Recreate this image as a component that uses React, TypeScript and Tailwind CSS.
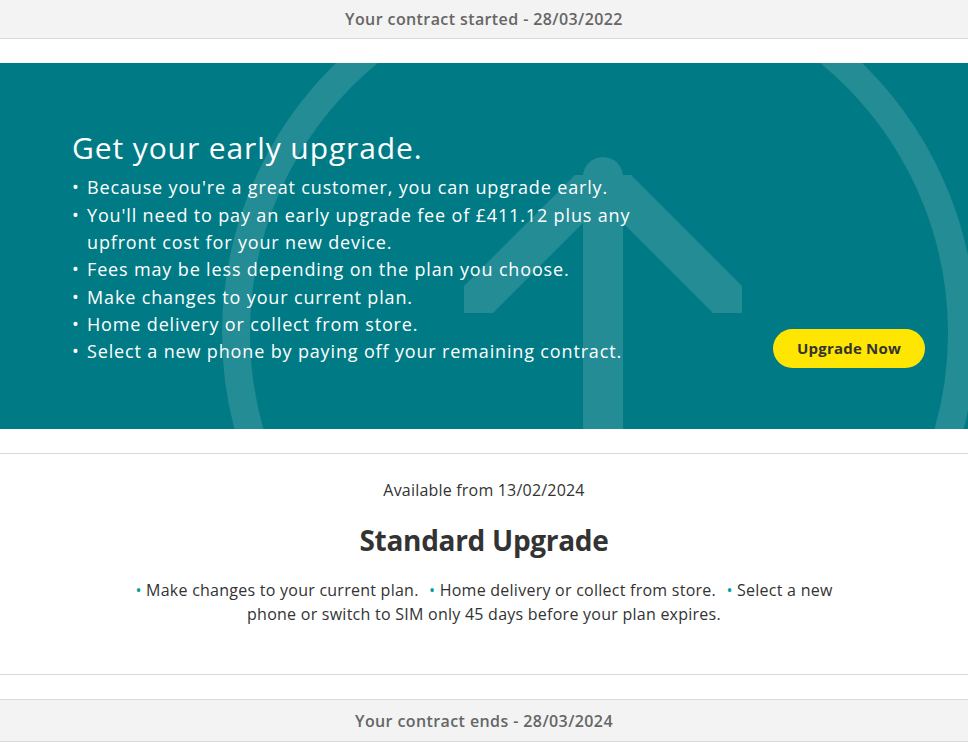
import React from 'react';

const earlyPoints = [
  "Because you're a great customer, you can upgrade early.",
  "You'll need to pay an early upgrade fee of £411.12 plus any upfront cost for your new device.",
  'Fees may be less depending on the plan you choose.',
  'Make changes to your current plan.',
  'Home delivery or collect from store.',
  'Select a new phone by paying off your remaining contract.',
];

const standardPoints = [
  'Make changes to your current plan.',
  'Home delivery or collect from store.',
  'Select a new phone or switch to SIM only 45 days before your plan expires.',
];

const BannerArt = () => (
  <svg
    className="absolute inset-0"
    width="968"
    height="366"
    viewBox="0 0 968 366"
    fill="none"
  >
    <circle cx="599" cy="270" r="363" stroke="#238c95" strokeWidth="28" />
    <rect x="583" y="114" width="40" height="260" fill="#238c95" />
    <circle cx="603" cy="114" r="20" fill="#238c95" />
    <polygon
      points="575,112 631,112 742,223 742,250 713,250 603,140 493,250 464,250 464,223"
      fill="#238c95"
    />
  </svg>
);

export default function App() {
  return (
    <div className="min-h-[756px] bg-white font-['Open_Sans',sans-serif]">
      <div className="flex h-[39px] items-center justify-center border-b border-[#dadada] bg-[#f3f3f3]">
        <p className="text-[16px] font-semibold tracking-[0.4px] text-[#666666]">
          Your contract started - 28/03/2022
        </p>
      </div>

      <div className="relative mt-6 h-[366px] overflow-hidden bg-[#007b85]">
        <BannerArt />
        <div className="relative flex h-full items-center pt-[4px] pl-[72px] pr-[43px]">
          <div className="flex flex-1 items-end justify-between">
            <div>
              <h2 className="text-[30px] leading-[36px] tracking-[0.9px] text-white">
                Get your early upgrade.
              </h2>
              <ul className="mt-[8px] text-[18px] leading-[27.3px] tracking-[0.85px] text-white">
                {earlyPoints.map((point) => (
                  <li key={point} className="flex">
                    <span className="w-[15px] shrink-0">•</span>
                    <span className="max-w-[545px]">{point}</span>
                  </li>
                ))}
              </ul>
            </div>
            <button className="-mb-[2px] h-[39px] w-[152px] rounded-full bg-[#ffe600] text-[15px] font-bold tracking-[0.2px] text-[#333333]">
              Upgrade Now
            </button>
          </div>
        </div>
      </div>

      <div className="mt-6 border-y border-[#dadada] px-6 pt-6 pb-[48px] text-center text-[#333333]">
        <p className="text-[16px] leading-[24px] tracking-[0.2px]">Available from 13/02/2024</p>
        <h3 className="mt-5 text-[28px] font-bold leading-[36px] tracking-[-0.3px]">Standard Upgrade</h3>
        <p className="mx-auto mt-5 max-w-[712px] text-[16px] leading-[24px] tracking-[0.25px]">
          {standardPoints.map((point, i) => (
            <React.Fragment key={point}>
              <span className={i > 0 ? 'ml-[6px] text-[#00a0a0]' : 'text-[#00a0a0]'}>•</span>{' '}
              {point}{' '}
            </React.Fragment>
          ))}
        </p>
      </div>

      <div className="mt-6 flex h-[43px] items-center justify-center border-y border-[#dadada] bg-[#f3f3f3]">
        <p className="text-[16px] font-semibold tracking-[0.4px] text-[#666666]">
          Your contract ends - 28/03/2024
        </p>
      </div>
    </div>
  );
}
